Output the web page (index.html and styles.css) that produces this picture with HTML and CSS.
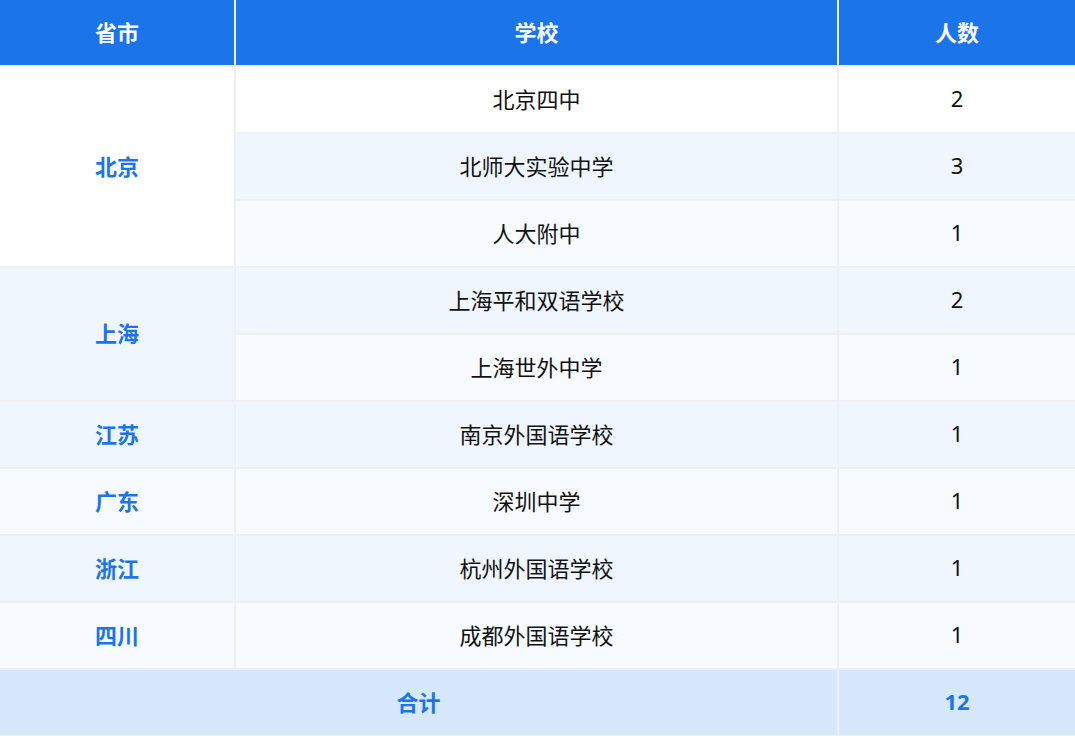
FILE: index.html
```html
<!DOCTYPE html>
<html lang="zh">
<head>
<meta charset="utf-8">
<link rel="stylesheet" href="styles.css">
</head>
<body>
<table class="grid">
  <colgroup>
    <col class="c-prov">
    <col class="c-school">
    <col class="c-num">
  </colgroup>
  <thead>
    <tr><th>省市</th><th>学校</th><th>人数</th></tr>
  </thead>
  <tbody>
    <tr class="r-white"><td class="prov" rowspan="3">北京</td><td>北京四中</td><td>2</td></tr>
    <tr class="r-a"><td>北师大实验中学</td><td>3</td></tr>
    <tr class="r-b"><td>人大附中</td><td>1</td></tr>
    <tr class="r-a"><td class="prov" rowspan="2">上海</td><td>上海平和双语学校</td><td>2</td></tr>
    <tr class="r-b"><td>上海世外中学</td><td>1</td></tr>
    <tr class="r-a"><td class="prov">江苏</td><td>南京外国语学校</td><td>1</td></tr>
    <tr class="r-b"><td class="prov">广东</td><td>深圳中学</td><td>1</td></tr>
    <tr class="r-a"><td class="prov">浙江</td><td>杭州外国语学校</td><td>1</td></tr>
    <tr class="r-b"><td class="prov">四川</td><td>成都外国语学校</td><td>1</td></tr>
  </tbody>
  <tfoot>
    <tr class="total"><td colspan="2">合计</td><td>12</td></tr>
  </tfoot>
</table>
</body>
</html>
```
FILE: styles.css
```css
html, body {
  margin: 0;
  padding: 0;
  background: #ffffff;
}
body {
  font-family: "Noto Sans", "Noto Sans CJK SC", sans-serif;
  font-size: 22px;
  color: #111111;
}
.grid {
  width: 1075px;
  border-collapse: separate;
  border-spacing: 0;
  table-layout: fixed;
}
.c-prov { width: 235px; }
.c-school { width: 603px; }
.c-num { width: 237px; }
.grid th,
.grid td {
  padding: 0 0 4px 0;
  text-align: center;
  vertical-align: middle;
  border: 1px solid #eef0f3;
  box-sizing: border-box;
}
.grid th {
  background: #1b74e8;
  color: #ffffff;
  font-weight: 700;
  height: 66px;
  border-top: none;
}
.grid td {
  height: 67px;
}
.grid th:first-child,
.grid td.prov,
.total td:first-child {
  border-left: none;
}
.grid th:last-child,
.grid td:last-child {
  border-right: none;
}
.r-white td { background: #ffffff; }
.r-a td { background: #f0f6fe; }
.r-b td { background: #f7fbff; }
.grid td.prov {
  color: #1b74e8;
  font-weight: 700;
}
.total td {
  background: #d6e8fc;
  color: #1b74e8;
  font-weight: 700;
}
```
